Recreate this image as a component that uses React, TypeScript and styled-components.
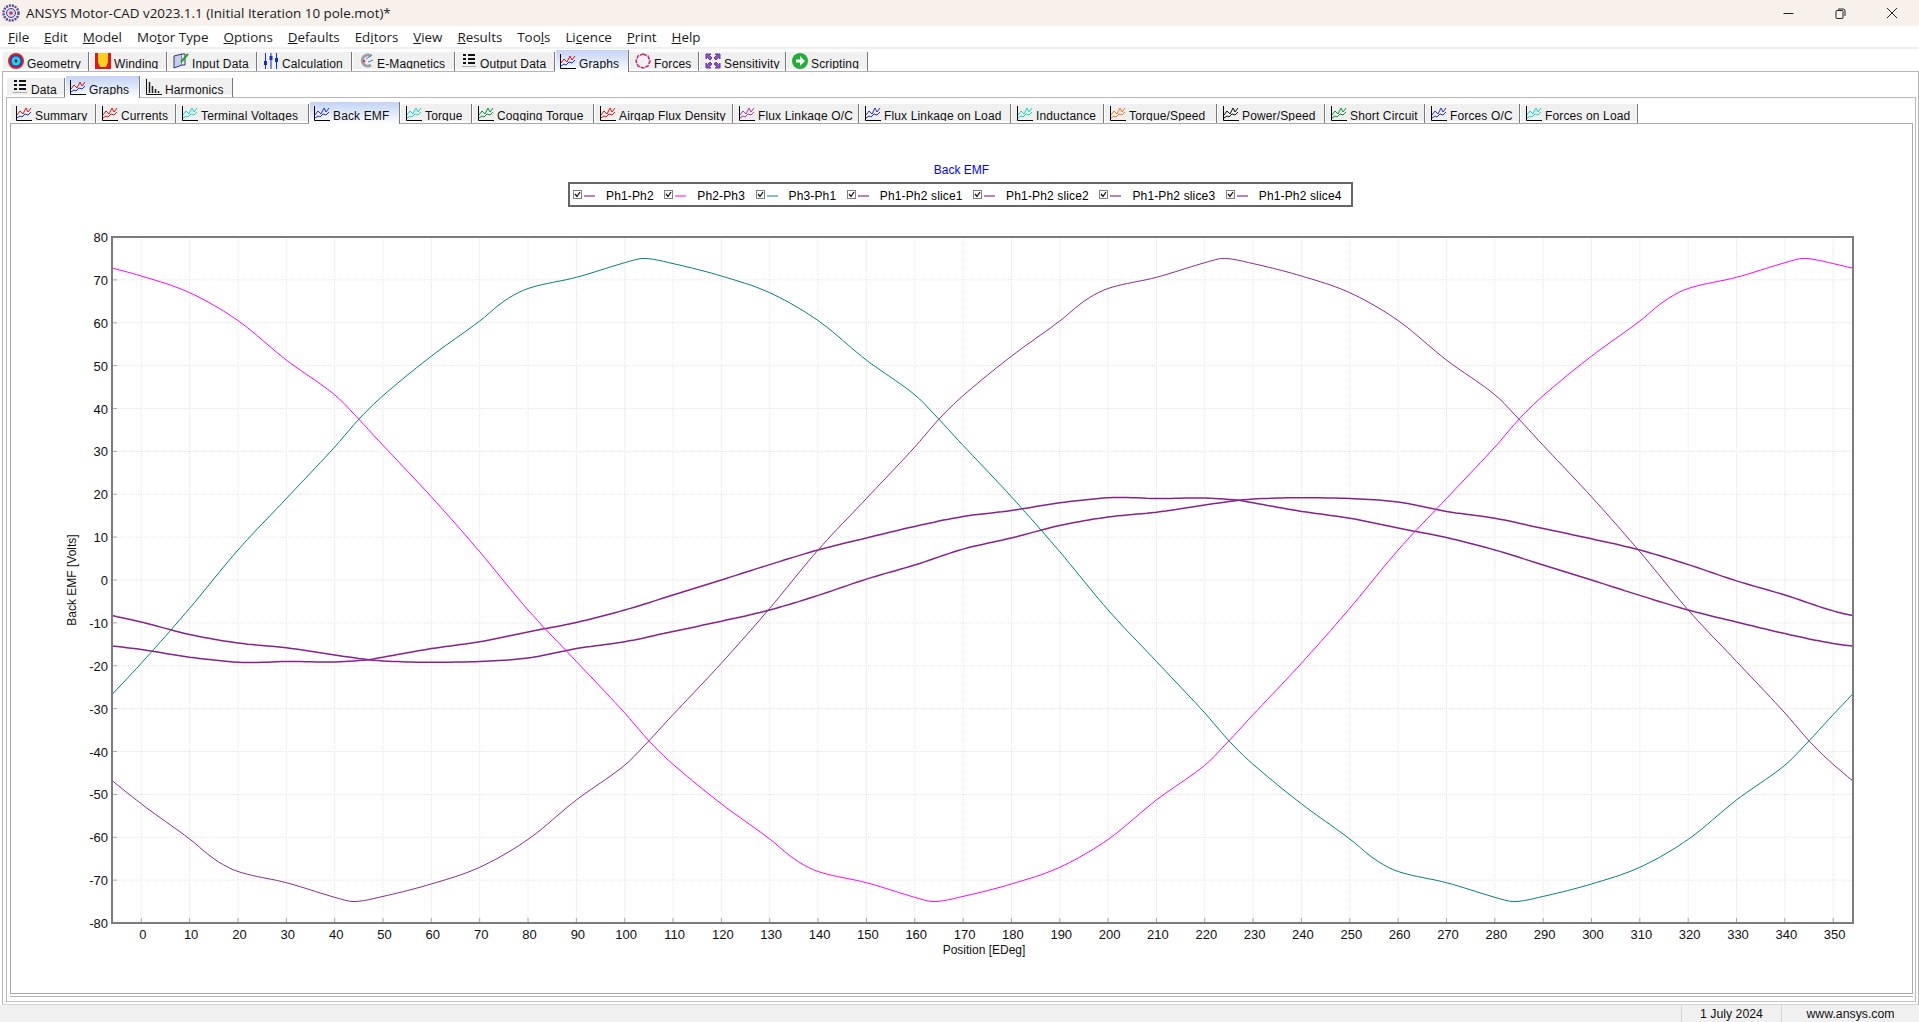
import React from "react";
import styled, { createGlobalStyle } from "styled-components";

const GlobalStyle = createGlobalStyle`
html, body {
    margin: 0;
    padding: 0;
    height: 100%;
    background: #fff;
    overflow: hidden;
}
* {
    box-sizing: border-box;
}
`;

const Page = styled.div`
width: 100%;
height: 100vh;
display: flex;
flex-direction: column;
font-family: "Liberation Sans", Arial, sans-serif;
font-size: 12px;
color: #000;
`;

const TitleBar = styled.div`
height: 26px;
flex: none;
display: flex;
align-items: center;
background: #f7f0eb;
padding: 0 1px 0 2px;
`;

const TitleText = styled.div`
margin-left: 6px;
font-family: "Open Sans", "Noto Sans", sans-serif;
font-size: 13.4px;
color: #1a1a1a;
flex: 1;
`;

const WindowButton = styled.div`
width: 52px;
height: 26px;
display: flex;
align-items: center;
justify-content: center;
`;

const MenuBar = styled.div`
height: 21px;
flex: none;
display: flex;
align-items: center;
gap: 14.9px;
padding-left: 8px;
background: #fff;
font-family: "Open Sans", "Noto Sans", sans-serif;
font-size: 13.4px;
color: #1a1a1a;
`;

const AccessKey = styled.span`
text-decoration: underline;
`;

const Rule = styled.div`
height: 2px;
flex: none;
margin-bottom: 3px;
background: #f0f0f0;
`;

const TabRow = styled.div<{ $left: number }>`
height: 19px;
flex: none;
display: flex;
align-items: flex-end;
padding-left: ${(p) => p.$left}px;
position: relative;
z-index: 1;
`;

const Tab = styled.div<{ $w: number; $active?: boolean }>`
width: ${(p) => p.$w}px;
flex: none;
height: ${(p) => (p.$active ? 22 : 19)}px;
margin-bottom: ${(p) => (p.$active ? -1 : 0)}px;
border-right: 1px solid #7a7a7a;
background: ${(p) =>
    p.$active ? "linear-gradient(#c3d3f5, #e6edfb 60%, #fff)" : "linear-gradient(#f0f0f0 17px, #fff 17px)"};
`;

const TabInner = styled.div<{ $active?: boolean }>`
height: ${(p) => (p.$active ? 19 : 17)}px;
padding: ${(p) => (p.$active ? "2px" : "0")} 0 0 ${(p) => (p.$active ? 4 : 5)}px;
display: flex;
align-items: flex-start;
gap: 3px;
overflow: hidden;
border-left: 1px solid #fff;
`;

const TabIconBox = styled.div`
width: 16px;
height: 16px;
flex: none;
margin-top: 1px;
`;

const TabLabel = styled.span`
margin-top: 5px;
line-height: 14px;
white-space: nowrap;
letter-spacing: 0.14px;
color: #101010;
`;

const OuterPanel = styled.div`
flex: 1;
min-height: 0;
display: flex;
flex-direction: column;
`;

const PanelOne = styled.div`
flex: 1;
min-height: 0;
margin-left: 2px;
display: flex;
flex-direction: column;
padding: 6px 2px 2px 3px;
border: 1px solid #b4b4b4;
border-bottom-color: #d8d8d8;
`;

const PanelTwo = styled.div`
flex: 1;
min-height: 0;
display: flex;
flex-direction: column;
padding: 6px 2px 7px 3px;
border: 1px solid #b8b8b8;
border-bottom-color: #c4c4c4;
`;

const PanelThree = styled.div`
flex: 1;
min-height: 0;
display: flex;
flex-direction: column;
align-items: center;
border: 1px solid #a8a8a8;
box-shadow: 0 2px 0 #fff, 0 3px 0 #b4b4b4;
`;

const ChartTitle = styled.div`
margin-top: 39px;
height: 14px;
line-height: 14px;
color: #0000ff;
font-size: 12px;
`;

const Legend = styled.div`
margin-top: 5px;
margin-left: -2px;
width: 785px;
height: 25px;
flex: none;
display: flex;
align-items: center;
gap: 10.5px;
padding: 2px 0 0 3px;
border: 2px solid #666;
letter-spacing: 0.15px;
`;

const LegendItem = styled.div`
display: flex;
align-items: center;
`;

const LegendCheck = styled.div`
width: 9px;
height: 9px;
margin: -3px 2px 0 0;
border: 1px solid #808080;
display: flex;
align-items: center;
justify-content: center;
`;

const LegendSwatch = styled.div<{ $color: string }>`
width: 11px;
height: 2px;
margin-right: 11px;
background: ${(p) => p.$color};
`;

const Plot = styled.svg`
margin-top: 9px;
align-self: flex-start;
flex: none;
display: block;
font-family: "Liberation Sans", Arial, sans-serif;
`;

const StatusBar = styled.div`
height: 17px;
flex: none;
display: flex;
justify-content: flex-end;
align-items: center;
background: #f0f0f0;
`;

const StatusCell = styled.div<{ $w: number }>`
width: ${(p) => p.$w}px;
height: 17px;
line-height: 18px;
text-align: center;
border-left: 1px solid #d4d4d4;
font-size: 12.3px;
color: #101010;
`;

// curve data read off the plot: half a period, the other half is the negative
const MAIN_WAVE: [number, number][] = [
    [40, -74], [44, -75], [50, -73.8], [60, -70.9], [70, -67], [80, -60.5], [90, -51.3], [100, -43.2],
    [105, -37.5], [110, -31.4], [120, -19.4], [130, -6.6], [140, 7], [150, 19], [160, 31], [165, 37.5],
    [170, 43], [180, 52.2], [190, 60.4], [195, 65], [200, 68], [210, 70.6],
];

const SLICE_A: [number, number][] = [
    [60, -19.2], [70, -19], [80, -18.2], [90, -16], [100, -14.4], [110, -12], [120, -9.6], [130, -7],
    [140, -3.6], [150, 0.2], [160, 3.5], [170, 7.2], [180, 9.8], [190, 12.7], [200, 14.7], [210, 15.8],
    [220, 17.5], [228, 18.7], [235, 19.1],
];

const SLICE_B: [number, number][] = [
    [30, -19], [40, -19.1], [47, -18.6], [50, -18], [60, -16], [70, -14.4], [80, -12.1], [90, -9.9],
    [100, -7], [110, -3.5], [120, 0], [130, 3.6], [140, 7], [150, 9.8], [160, 12.5], [170, 14.8],
    [180, 16.2], [190, 18], [200, 19.2], [205, 19.2],
];

// hermite interpolation through the whole period, so the curve has no corners at the table points
function sample(table: [number, number][], deg: number): number {
    const start = table[0][0];
    const half = table.map(([x, y]): [number, number] => [x + 180, -y]);
    const pts: [number, number][] = [
        ...half.slice(-2).map(([x, y]): [number, number] => [x - 360, y]),
        ...table,
        ...half,
        ...table.slice(0, 2).map(([x, y]): [number, number] => [x + 360, y]),
    ];
    const x = (((deg - start) % 360) + 360) % 360 + start;
    for (let i = 1; i < pts.length - 2; i++) {
        const [x0, y0] = pts[i];
        const [x1, y1] = pts[i + 1];
        if (x >= x0 && x <= x1) {
            const h = x1 - x0;
            const t = (x - x0) / h;
            const m0 = ((y1 - pts[i - 1][1]) / (x1 - pts[i - 1][0])) * h;
            const m1 = ((pts[i + 2][1] - y0) / (pts[i + 2][0] - x0)) * h;
            return (
                (2 * t ** 3 - 3 * t ** 2 + 1) * y0 +
                (t ** 3 - 2 * t ** 2 + t) * m0 +
                (-2 * t ** 3 + 3 * t ** 2) * y1 +
                (t ** 3 - t ** 2) * m1
            );
        }
    }
    return 0;
}

const PLOT_W = 1901;
const PLOT_H = 777;
const LEFT = 101;
const RIGHT = 1842;
const TOP = 21;
const BOTTOM = 707;
const px = (deg: number) => 130.3 + deg * 4.834;
const py = (v: number) => TOP + ((80 - v) * (BOTTOM - TOP)) / 160;

function curvePoints(table: [number, number][], shift: number): string {
    const pts: string[] = [];
    for (let d = -6; d <= 354; d += 1) {
        pts.push(`${px(d).toFixed(1)},${py(sample(table, d - shift)).toFixed(1)}`);
    }
    return pts.join(" ");
}

const yValues = Array.from({ length: 17 }, (_, i) => 80 - i * 10);
const xValues = Array.from({ length: 36 }, (_, i) => i * 10);

const ChartPlot: React.FC = () => (
    <Plot width={PLOT_W} height={PLOT_H}>
        {xValues.map((x) => (
            <line key={x} x1={px(x)} x2={px(x)} y1={TOP} y2={BOTTOM} stroke="#e4e4e4" strokeDasharray="1 1" />
        ))}
        {yValues.map((v) => (
            <line key={v} x1={LEFT} x2={RIGHT} y1={py(v)} y2={py(v)} stroke="#e4e4e4" strokeDasharray="1 1" />
        ))}
        {xValues.map((x) => (
            <line key={x} x1={px(x)} x2={px(x)} y1={BOTTOM - 5} y2={BOTTOM} stroke="#a8a8a8" />
        ))}
        {yValues.map((v) => (
            <line key={v} x1={LEFT} x2={LEFT + 5} y1={py(v)} y2={py(v)} stroke="#a8a8a8" />
        ))}
        <polyline points={curvePoints(SLICE_A, 0)} fill="none" stroke="#8b1e90" strokeWidth={1.5} />
        <polyline points={curvePoints(SLICE_B, 0)} fill="none" stroke="#8b1e90" strokeWidth={1.5} />
        <polyline points={curvePoints(MAIN_WAVE, 0)} fill="none" stroke="#8b2a90" strokeWidth={1} />
        <polyline points={curvePoints(MAIN_WAVE, 120)} fill="none" stroke="#ff00ff" strokeWidth={1} />
        <polyline points={curvePoints(MAIN_WAVE, 240)} fill="none" stroke="#008080" strokeWidth={1} />
        <rect x={LEFT} y={TOP} width={RIGHT - LEFT} height={BOTTOM - TOP} fill="none" stroke="#7c7c7c" strokeWidth={2} />
        {yValues.map((v) => (
            <text key={v} x={LEFT - 4} y={py(v) + 5} fontSize={13} textAnchor="end" fill="#101010">
                {v}
            </text>
        ))}
        {xValues.map((x) => (
            <text key={x} x={px(x) + 1.5} y={BOTTOM + 16} fontSize={13} textAnchor="middle" fill="#101010">
                {x}
            </text>
        ))}
        <text x={973} y={738} fontSize={12} textAnchor="middle" fill="#101010">
            Position [EDeg]
        </text>
        <text x={65} y={364} fontSize={12} textAnchor="middle" fill="#101010" transform="rotate(-90 65 364)">
            Back EMF [Volts]
        </text>
    </Plot>
);

const GraphIcon: React.FC<{ top: string; low: string; axis?: string }> = ({ top, low, axis = "#000" }) => (
    <svg width="16" height="16" viewBox="0 0 16 16">
        <path d="M0.5 1v14.5H16" fill="none" stroke={axis} />
        <path d="M1 10l3-4 3 3 3-6 2 4 3-4" fill="none" stroke={top} />
        <path d="M1 13l3-2 2 1 3-3 3 1 3-3" fill="none" stroke={low} />
    </svg>
);

const GridIcon: React.FC = () => (
    <svg width="16" height="16" viewBox="0 0 16 16">
        <path d="M2 2h3M7 2h7M2 6h3M7 6h7M2 10h3M7 10h7" stroke="#111" strokeWidth="2" />
        <path d="M1 13.5h14" stroke="#aaa" />
    </svg>
);

const icons: Record<string, React.ReactNode> = {
    geometry: (
        <svg width="16" height="16" viewBox="0 0 16 16">
            <circle cx="8" cy="8" r="7" fill="#1f3fc0" stroke="#d8202a" strokeWidth="2" />
            <circle cx="8" cy="8" r="4.5" fill="#19d6e6" />
            <circle cx="8" cy="8" r="1.4" fill="#111" />
        </svg>
    ),
    winding: (
        <svg width="16" height="16" viewBox="0 0 16 16">
            <rect width="16" height="16" fill="#e8141c" />
            <path d="M3 0h10v9l-2 5H5L3 9z" fill="#fad21e" />
        </svg>
    ),
    input: (
        <svg width="16" height="16" viewBox="0 0 16 16">
            <path d="M1 3l8-2v11l-8 3z" fill="#c7cdf0" stroke="#2c3a70" />
            <path d="M9 1h3v11H9" fill="#e8e8f4" stroke="#2c3a70" />
            <path d="M8 9l7-8" stroke="#2aa02a" strokeWidth="2" />
        </svg>
    ),
    calc: (
        <svg width="16" height="16" viewBox="0 0 16 16">
            <path d="M2.5 0v16M8 0v16M13.5 0v16" stroke="#1030c8" />
            <path d="M1 8h3v4H1zM6.500 3h3v4h-3zM12 5h3v4h-3z" fill="#1030c8" />
        </svg>
    ),
    magnet: (
        <svg width="16" height="16" viewBox="0 0 16 16">
            <path d="M13 3a5.500 5.500 0 1 0 0 9" fill="none" stroke="#9aa0a8" strokeWidth="3" />
            <path d="M8 6l6-4M10 9l5-2" stroke="#3a78d0" />
            <circle cx="6" cy="8" r="1.500" fill="#d05040" />
        </svg>
    ),
    grid: <GridIcon />,
    forces: (
        <svg width="16" height="16" viewBox="0 0 16 16">
            <path d="M8 1l5 2 2 5-2 5-5 2-5-2-2-5 2-5z" fill="none" stroke="#b8307a" strokeWidth="1.600" strokeDasharray="4 1" />
        </svg>
    ),
    sensitivity: (
        <svg width="16" height="16" viewBox="0 0 16 16">
            <path d="M1 1h5L4.500 2.500 7 5 5 7 2.500 4.500 1 6zM15 1v5l-1.500-1.500L11 7 9 5l2.500-2.500L10 1zM1 15v-5l1.500 1.500L5 9l2 2-2.500 2.500L6 15zM15 15h-5l1.500-1.500L9 11l2-2 2.500 2.500L15 10z" fill="#8a55bb" stroke="#6f35a5" />
        </svg>
    ),
    script: (
        <svg width="16" height="16" viewBox="0 0 16 16">
            <circle cx="8" cy="8" r="8" fill="#22ac38" />
            <path d="M4 6.500h4V3l5 5-5 5V9.500H4z" fill="#fff" />
        </svg>
    ),
    bars: (
        <svg width="16" height="16" viewBox="0 0 16 16">
            <path d="M0.500 0v15.500H16" fill="none" stroke="#111" />
            <path d="M3.500 3v11M6.500 7v7M9.500 10v4M12.500 12v2" stroke="#222" strokeWidth="1.500" />
        </svg>
    ),
    summary: <GraphIcon top="#e01010" low="#1030d0" />,
    red: <GraphIcon top="#e01010" low="#e01010" />,
    cyan: <GraphIcon top="#10d8c0" low="#10d8c0" />,
    blue: <GraphIcon top="#2a30c8" low="#2a30c8" />,
    green: <GraphIcon top="#109040" low="#109040" />,
    purple: <GraphIcon top="#a040a0" low="#a040a0" />,
    orange: <GraphIcon top="#f07818" low="#f07818" />,
    black: <GraphIcon top="#111" low="#111" />,
};

type TabDef = { label: string; icon: string; w: number; active?: boolean };

const topTabs: TabDef[] = [
    { label: "Geometry", icon: "geometry", w: 87 },
    { label: "Winding", icon: "winding", w: 78 },
    { label: "Input Data", icon: "input", w: 90 },
    { label: "Calculation", icon: "calc", w: 95 },
    { label: "E-Magnetics", icon: "magnet", w: 103 },
    { label: "Output Data", icon: "grid", w: 100 },
    { label: "Graphs", icon: "summary", w: 74, active: true },
    { label: "Forces", icon: "forces", w: 70 },
    { label: "Sensitivity", icon: "sensitivity", w: 87 },
    { label: "Scripting", icon: "script", w: 82 },
];

const midTabs: TabDef[] = [
    { label: "Data", icon: "grid", w: 59 },
    { label: "Graphs", icon: "summary", w: 75, active: true },
    { label: "Harmonics", icon: "bars", w: 93 },
];

const graphTabs: TabDef[] = [
    { label: "Summary", icon: "summary", w: 86 },
    { label: "Currents", icon: "red", w: 80 },
    { label: "Terminal Voltages", icon: "cyan", w: 133 },
    { label: "Back EMF", icon: "blue", w: 91, active: true },
    { label: "Torque", icon: "cyan", w: 72 },
    { label: "Cogging Torque", icon: "green", w: 122 },
    { label: "Airgap Flux Density", icon: "red", w: 139 },
    { label: "Flux Linkage O/C", icon: "purple", w: 126 },
    { label: "Flux Linkage on Load", icon: "blue", w: 152 },
    { label: "Inductance", icon: "cyan", w: 93 },
    { label: "Torque/Speed", icon: "orange", w: 113 },
    { label: "Power/Speed", icon: "black", w: 108 },
    { label: "Short Circuit", icon: "green", w: 100 },
    { label: "Forces O/C", icon: "blue", w: 95 },
    { label: "Forces on Load", icon: "cyan", w: 118 },
];

const Tabs: React.FC<{ items: TabDef[]; left: number }> = ({ items, left }) => (
    <TabRow $left={left}>
        {items.map((t) => (
            <Tab key={t.label} $w={t.w} $active={t.active}>
                <TabInner $active={t.active}>
                    <TabIconBox>{icons[t.icon]}</TabIconBox>
                    <TabLabel>{t.label}</TabLabel>
                </TabInner>
            </Tab>
        ))}
    </TabRow>
);

const menus: [string, string, string][] = [
    ["", "F", "ile"],
    ["", "E", "dit"],
    ["", "M", "odel"],
    ["Mo", "t", "or Type"],
    ["", "O", "ptions"],
    ["", "D", "efaults"],
    ["Ed", "i", "tors"],
    ["", "V", "iew"],
    ["", "R", "esults"],
    ["Too", "l", "s"],
    ["Li", "c", "ence"],
    ["", "P", "rint"],
    ["", "H", "elp"],
];

const legendItems = [
    { label: "Ph1-Ph2", color: "#c080c0" },
    { label: "Ph2-Ph3", color: "#ff80ff" },
    { label: "Ph3-Ph1", color: "#80c0c0" },
    { label: "Ph1-Ph2 slice1", color: "#c080c0" },
    { label: "Ph1-Ph2 slice2", color: "#c080c0" },
    { label: "Ph1-Ph2 slice3", color: "#c080c0" },
    { label: "Ph1-Ph2 slice4", color: "#c080c0" },
];

const App: React.FC = () => {
    return (
        <Page>
            <GlobalStyle />
            <TitleBar>
                <svg width="18" height="18" viewBox="0 0 18 18">
                    <circle cx="9" cy="9" r="7.500" fill="none" stroke="#5a4a9a" strokeWidth="2.500" strokeDasharray="2 1" />
                    <circle cx="9" cy="9" r="4.500" fill="#d8d4ec" stroke="#3a3a90" />
                    <circle cx="9" cy="9" r="1.800" fill="#c83a5a" />
                </svg>
                <TitleText>ANSYS Motor-CAD v2023.1.1 (Initial Iteration 10 pole.mot)*</TitleText>
                <WindowButton>
                    <svg width="11" height="11" viewBox="0 0 11 11">
                        <path d="M0.500 5.500h10" stroke="#222" />
                    </svg>
                </WindowButton>
                <WindowButton>
                    <svg width="11" height="11" viewBox="0 0 11 11">
                        <rect x="1" y="2.500" width="7" height="8" rx="1" fill="none" stroke="#222" />
                        <path d="M3 1h5a2 2 0 0 1 2 2v5" fill="none" stroke="#222" />
                    </svg>
                </WindowButton>
                <WindowButton>
                    <svg width="12" height="12" viewBox="0 0 12 12">
                        <path d="M1 1l10 10M11 1L1 11" stroke="#222" />
                    </svg>
                </WindowButton>
            </TitleBar>
            <MenuBar>
                {menus.map(([a, k, b]) => (
                    <span key={a + k + b}>
                        {a}
                        <AccessKey>{k}</AccessKey>
                        {b}
                    </span>
                ))}
            </MenuBar>
            <Rule />
            <Tabs items={topTabs} left={2} />
            <OuterPanel>
                <PanelOne>
                    <Tabs items={midTabs} left={0} />
                    <PanelTwo>
                        <Tabs items={graphTabs} left={0} />
                        <PanelThree>
                            <ChartTitle>Back EMF</ChartTitle>
                            <Legend>
                                {legendItems.map((l) => (
                                    <LegendItem key={l.label}>
                                        <LegendCheck>
                                            <svg width="7" height="7" viewBox="0 0 7 7">
                                                <path d="M1 3l2 2.500L6 1" fill="none" stroke="#111" strokeWidth="1.300" />
                                            </svg>
                                        </LegendCheck>
                                        <LegendSwatch $color={l.color} />
                                        {l.label}
                                    </LegendItem>
                                ))}
                            </Legend>
                            <ChartPlot />
                        </PanelThree>
                    </PanelTwo>
                </PanelOne>
            </OuterPanel>
            <StatusBar>
                <StatusCell $w={100}>1 July 2024</StatusCell>
                <StatusCell $w={138}>www.ansys.com</StatusCell>
            </StatusBar>
        </Page>
    );
};

export default App;
